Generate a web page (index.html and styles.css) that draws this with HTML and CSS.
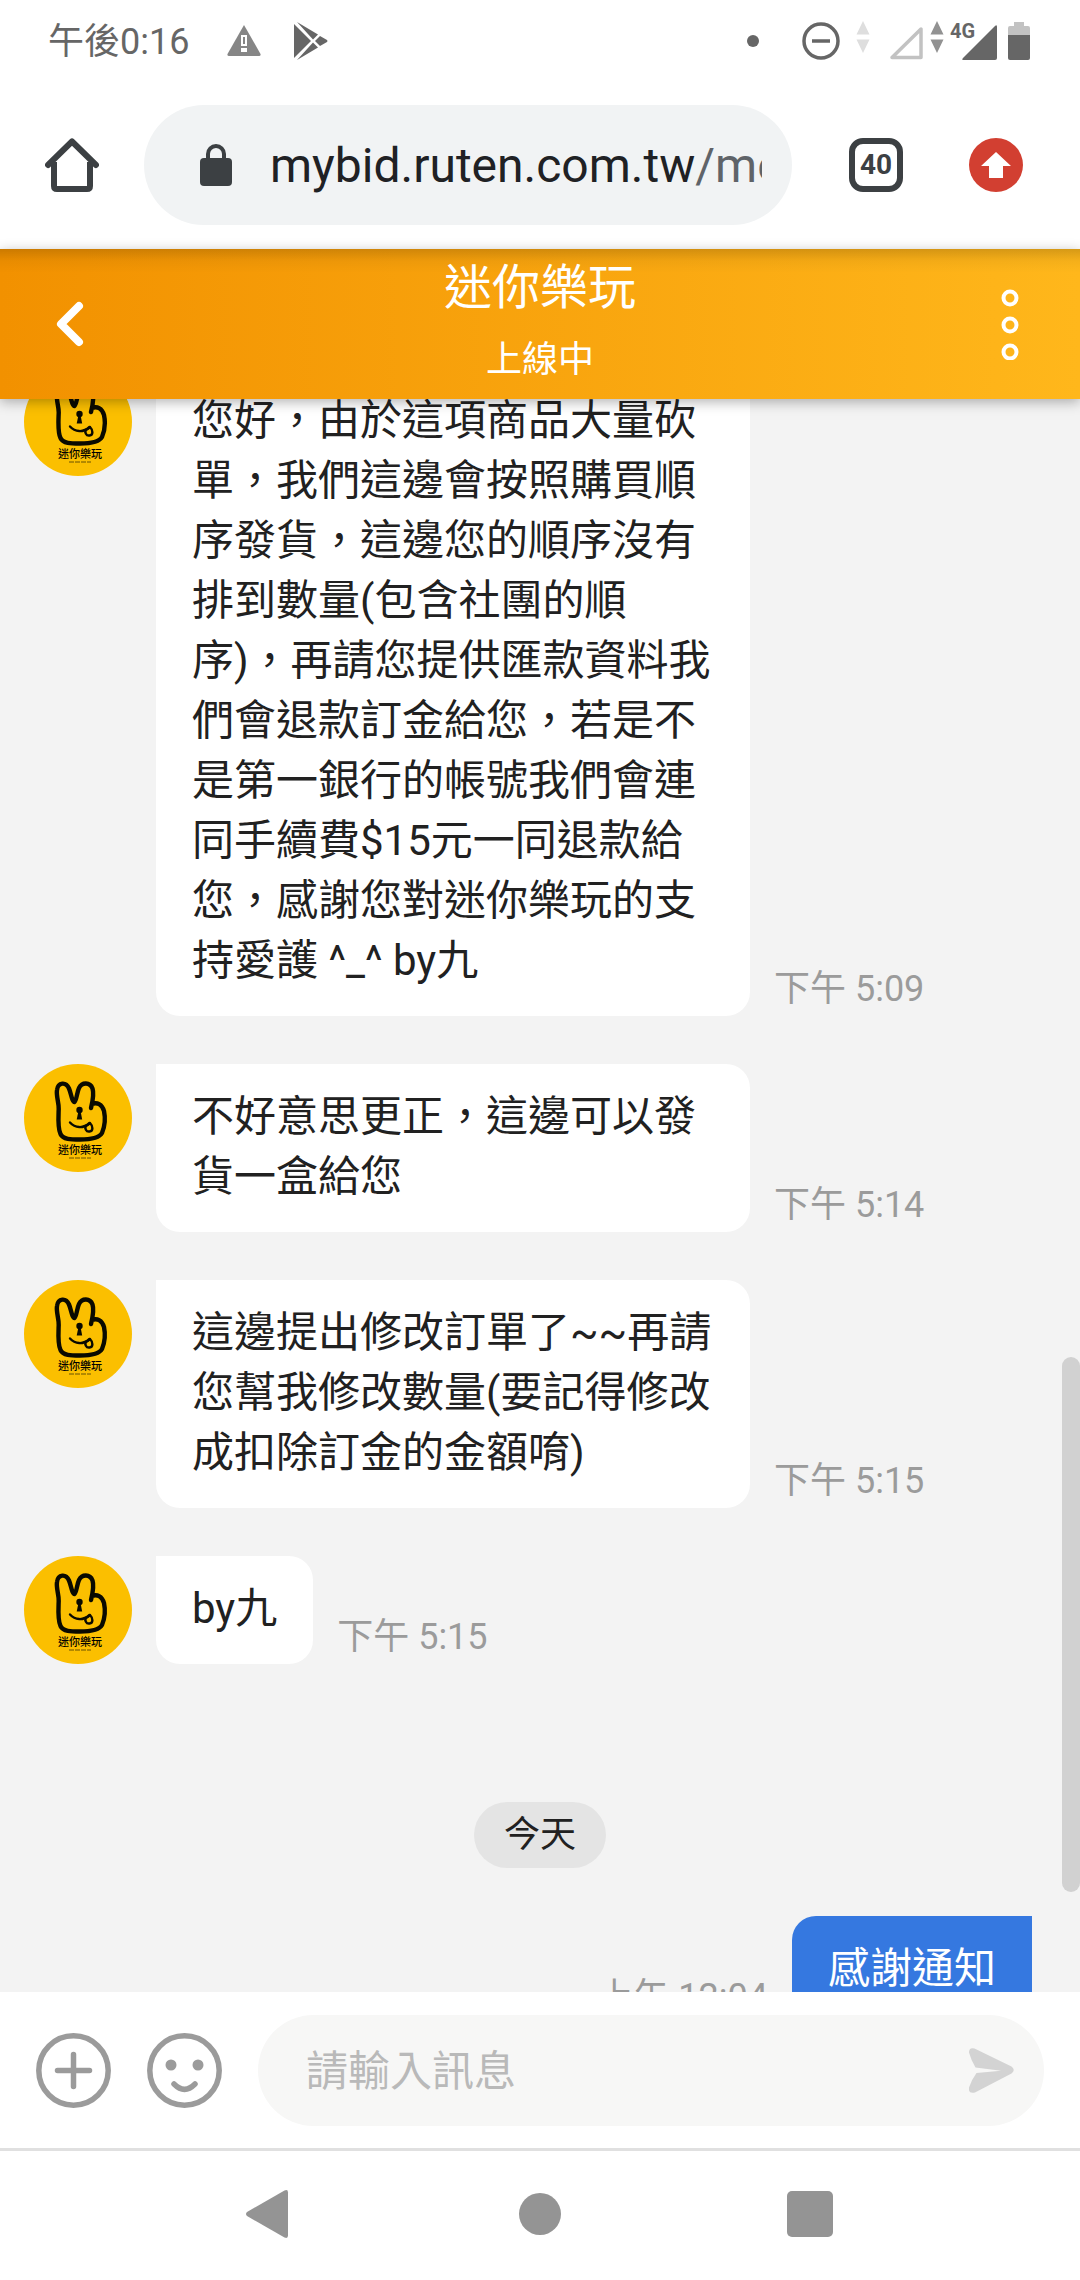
FILE: index.html
```html
<!DOCTYPE html>
<html lang="zh-Hant">
<head>
    <meta charset="UTF-8">
    <meta name="viewport" content="width=device-width, initial-scale=1.0">
    <title>迷你樂玩</title>
    <link rel="stylesheet" href="styles.css">
</head>
<body>

<!-- shop avatar, reused by every message -->
<svg class="sprite" aria-hidden="true">
    <symbol id="avatar" viewBox="0 0 108 108">
        <circle cx="54" cy="54" r="54" fill="#fbbf00"/>
        <g fill="none" stroke="#0a0a00" stroke-linecap="round" stroke-linejoin="round">
            <path stroke-width="4.4" d="M67 44C69 36 70 29 68.500 24.500C66 18 58 18 55 24C53 28 52.500 37 50.500 38C48 38 47 29 45 24.500C42 17.500 34 18 33 26C32 32 35 39 34.700 45C34.500 52 33.500 64 36.500 70C39 75.500 47 75.500 56 75.500C66 75.500 75 74.500 78 69C80.500 63 81.500 54 80 47C78 40 73 38 68 40"/>
            <path stroke-width="2.4" d="M46 58.500C51 64 59 65 65.500 59"/>
            <path stroke-width="2.400" d="M66 59C69 62 69.500 67 65.500 67.500C62 68 60.500 64 62 62C63 61 64.500 61 66 59z"/>
        </g>
        <circle cx="55.500" cy="46" r="3.200" fill="#0a0a00"/>
        <path d="M54.500 47h2l1.700 8.500h-5.500z" fill="#0a0a00"/>
        <text x="56" y="90" text-anchor="middle" class="avatar-name">迷你樂玩</text>
        <path d="M45 94h22" stroke="#6b5200" stroke-width="1" stroke-dasharray="5 1"/>
    </symbol>
</svg>

<div class="status-bar">
    <span class="clock">午後0:16</span>
    <svg class="icon-warning" width="34" height="32" viewBox="0 0 34 32">
        <path d="M17 0L33.500 29q.5 2-1.500 2H2q-2 0-1.500-2z" fill="#868686"/>
        <path d="M14 10h6v11h-6zM14 23h6v4h-6z" fill="#fff"/>
        <path d="M16 12h2v7h-2z" fill="#868686"/>
    </svg>
    <svg class="icon-play" width="34" height="38" viewBox="0 0 34 38" fill="#666">
        <path d="M0 2L17 19L0 36z"/>
        <path d="M3 0L24 12.500L19 17.500zM3 38L24 25.500L19 20.500z"/>
        <path d="M26 14L33 18q1 1 0 2L26 24L21 19z"/>
    </svg>
    <span class="dot"></span>
    <svg class="icon-dnd" width="38" height="38" viewBox="0 0 38 38" fill="none" stroke="#666" stroke-width="3.500">
        <circle cx="19" cy="19" r="17"/>
        <path d="M10 19h18"/>
    </svg>
    <svg class="icon-data" width="14" height="32" viewBox="0 0 14 32" fill="#dedede">
        <path d="M7 0l6.500 13.500H.5zM7 32l6.500-13.500H.5z"/>
    </svg>
    <svg class="icon-signal" width="36" height="36" viewBox="0 0 36 36">
        <path d="M33 4v28.500H4z" fill="none" stroke="#c2c2c2" stroke-width="3.500" stroke-linejoin="round"/>
    </svg>
    <svg class="icon-4g" width="68" height="40" viewBox="0 0 68 40">
        <path d="M7 0l6.500 13.500H.5zM7 32l6.500-13.500H.5z" fill="#929292"/>
        <path d="M65 5q2-2 2 1v31q0 2-2 2H34q-3 0-1-2z" fill="#666"/>
        <text x="20" y="17" class="label-4g">4G</text>
    </svg>
    <svg class="icon-battery" width="22" height="38" viewBox="0 0 22 38">
        <path d="M6 0h10v4h4q2 0 2 2v8H0V6q0-2 2-2h4z" fill="#c2c2c2"/>
        <path d="M0 13h22v23q0 2-2 2H2q-2 0-2-2z" fill="#666"/>
    </svg>
</div>

<div class="browser-bar">
    <button type="button" class="bar-button" aria-label="首頁">
        <svg width="54" height="54" viewBox="0 0 54 54" fill="none" stroke="#3c4043" stroke-width="6">
            <path d="M9 24v24q0 3 3 3h30q3 0 3-3V24"/>
            <path d="M3 27L27 3.500L51 27" stroke-linecap="round" stroke-linejoin="round"/>
        </svg>
    </button>
    <div class="url-box">
        <svg width="32" height="42" viewBox="0 0 32 42">
            <rect y="14" width="32" height="28" rx="4" fill="#3c4043"/>
            <path d="M8 16v-6a8 8 0 0 1 16 0v6" fill="none" stroke="#3c4043" stroke-width="4"/>
        </svg>
        <div class="url"><span>mybid.ruten.com.tw</span><span class="path">/me</span></div>
    </div>
    <button type="button" class="tabs-button" aria-label="分頁">40</button>
    <button type="button" class="bar-button" aria-label="更新">
        <svg width="54" height="54" viewBox="0 0 54 54">
            <circle cx="27" cy="27" r="27" fill="#d23f31"/>
            <path d="M27 14L42 28H34V40H20V28H12z" fill="#fff"/>
        </svg>
    </button>
</div>

<header class="chat-header">
    <button type="button" class="bar-button" aria-label="返回">
        <svg width="54" height="54" viewBox="0 0 54 54">
            <path d="M36 9L18 27L36 45" fill="none" stroke="#fff" stroke-width="8" stroke-linecap="round" stroke-linejoin="round"/>
        </svg>
    </button>
    <div class="chat-title">
        <h1>迷你樂玩</h1>
        <p>上線中</p>
    </div>
    <button type="button" class="bar-button" aria-label="選單">
        <svg width="54" height="72" viewBox="0 0 54 72" fill="none" stroke="#fff" stroke-width="4">
            <circle cx="27" cy="10" r="6.500"/>
            <circle cx="27" cy="37" r="6.500"/>
            <circle cx="27" cy="64" r="6.500"/>
        </svg>
    </button>
</header>

<main class="chat">
    <div class="messages">
        <div class="message">
            <svg class="avatar"><use href="#avatar"/></svg>
            <p class="bubble">您好，由於這項商品大量砍單，我們這邊會按照購買順序發貨，這邊您的順序沒有排到數量(包含社團的順序)，再請您提供匯款資料我們會退款訂金給您，若是不是第一銀行的帳號我們會連同手續費$15元一同退款給您，感謝您對迷你樂玩的支持愛護 ^_^ by九</p>
            <time>下午 5:09</time>
        </div>
        <div class="message">
            <svg class="avatar"><use href="#avatar"/></svg>
            <p class="bubble">不好意思更正，這邊可以發貨一盒給您</p>
            <time>下午 5:14</time>
        </div>
        <div class="message">
            <svg class="avatar"><use href="#avatar"/></svg>
            <p class="bubble">這邊提出修改訂單了~~再請您幫我修改數量(要記得修改成扣除訂金的金額唷)</p>
            <time>下午 5:15</time>
        </div>
        <div class="message">
            <svg class="avatar"><use href="#avatar"/></svg>
            <p class="bubble">by九</p>
            <time>下午 5:15</time>
        </div>
        <div class="date">今天</div>
        <div class="message mine">
            <time>上午 12:04</time>
            <p class="bubble">感謝通知</p>
        </div>
    </div>
    <div class="scroll-thumb"></div>
</main>

<form class="composer">
    <button type="button" aria-label="新增">
        <svg width="75" height="75" viewBox="0 0 75 75" fill="none" stroke="#9b9b9b" stroke-width="5.500" stroke-linecap="round">
            <circle cx="37.500" cy="37.500" r="34.700"/>
            <path d="M37.500 21.500v32M21.500 37.500h32"/>
        </svg>
    </button>
    <button type="button" aria-label="表情">
        <svg width="75" height="75" viewBox="0 0 75 75" fill="none" stroke="#9b9b9b" stroke-width="5.500" stroke-linecap="round">
            <circle cx="37.500" cy="37.500" r="34.700"/>
            <path d="M27 51q10.500 10.500 21 0"/>
            <g fill="#9b9b9b" stroke="none">
                <circle cx="24" cy="32" r="5.500"/>
                <circle cx="51" cy="32" r="5.500"/>
            </g>
        </svg>
    </button>
    <div class="input-box">
        <input type="text" placeholder="請輸入訊息" aria-label="請輸入訊息">
        <button type="submit" aria-label="送出">
            <svg width="45" height="45" viewBox="0 0 45 45">
                <path d="M5.500.5L42.500 18.500Q47 22 42.500 25.500L6 44.500Q-1 46 0 39.500Q3 31 7.500 25L32 22.700L6.500 19.500Q2 12 0 4.500Q0-1 5.500.5z" fill="#d3d3d3"/>
            </svg>
        </button>
    </div>
</form>

<nav class="system-nav">
    <button type="button" aria-label="上一頁">
        <svg width="48" height="48" viewBox="0 0 48 48" fill="#949494">
            <path d="M38.500.5q3.500-1.500 3.500 2v43q0 3.500-3.500 2L1 26q-2-2 0-4z"/>
        </svg>
    </button>
    <button type="button" aria-label="主畫面">
        <svg width="48" height="48" viewBox="0 0 48 48" fill="#949494">
            <circle cx="24" cy="24" r="21"/>
        </svg>
    </button>
    <button type="button" aria-label="最近使用">
        <svg width="48" height="48" viewBox="0 0 48 48" fill="#949494">
            <rect x="1" y="1" width="46" height="46" rx="5"/>
        </svg>
    </button>
</nav>

</body>
</html>
```
FILE: styles.css
```css
* {
    box-sizing: border-box;
}
body {
    display: flex;
    flex-direction: column;
    height: 100vh;
    margin: 0;
    background-color: #fff;
    color: #212121;
    font-family: Roboto, "Noto Sans CJK TC", sans-serif;
    font-size: 42px;
}
h1, p {
    margin: 0;
    font-weight: 400;
}
svg {
    display: block;
    flex: none;
}
button {
    flex: none;
    padding: 0;
    border: none;
    background: none;
    font-family: inherit;
    cursor: pointer;
}
.sprite {
    position: absolute;
    width: 0;
    height: 0;
}

/* phone status bar */
.status-bar {
    display: flex;
    align-items: center;
    height: 81px;
    padding: 0 50px 0 48px;
}
.clock {
    margin-right: 38px;
    padding-top: 2px;
    color: #666;
    font-size: 36px;
    line-height: 42px;
}
.icon-warning {
    margin-right: 33px;
}
.dot {
    width: 12px;
    height: 12px;
    margin-left: auto;
    border-radius: 50%;
    background-color: #666;
}
.icon-dnd {
    margin-left: 43px;
}
.icon-data {
    margin-left: 16px;
    margin-bottom: 8px;
}
.icon-signal {
    margin-left: 18px;
    margin-top: 4px;
}
.icon-4g {
    margin-left: 6px;
}
.icon-battery {
    margin-left: 10px;
}
.label-4g {
    fill: #666;
    font-size: 20px;
    font-weight: 700;
}

/* browser toolbar */
.browser-bar {
    display: flex;
    align-items: center;
    height: 168px;
    padding: 0 57px 0 45px;
}
.url-box {
    display: flex;
    flex: 1;
    align-items: center;
    min-width: 0;
    height: 120px;
    margin: 0 57px 0 45px;
    padding: 0 30px 0 56px;
    border-radius: 60px;
    background-color: #f1f3f4;
}
.url {
    display: flex;
    flex: 1;
    margin-left: 38px;
    padding-top: 2px;
    overflow: hidden;
    color: #202124;
    font-size: 48px;
    line-height: 60px;
    white-space: nowrap;
}
.url .path {
    color: #5f6368;
}
.tabs-button {
    width: 54px;
    height: 54px;
    margin-right: 66px;
    border: 6px solid #3c4043;
    border-radius: 14px;
    color: #3c4043;
    font-size: 28px;
    font-weight: 700;
    line-height: 42px;
}

/* chat header */
.chat-header {
    position: relative;
    z-index: 1;
    display: flex;
    align-items: center;
    justify-content: space-between;
    height: 150px;
    padding: 0 43px;
    background: linear-gradient(rgba(0, 0, 0, 0.16), rgba(0, 0, 0, 0.04) 12px, transparent 24px),
        linear-gradient(to right, #f29100, #ffb71b);
    box-shadow: 0 3px 12px rgba(0, 0, 0, 0.3);
    color: #fff;
    text-align: center;
}
.chat-title h1 {
    font-size: 48px;
    line-height: 72px;
}
.chat-title p {
    font-size: 36px;
    line-height: 72px;
}

/* conversation */
.chat {
    position: relative;
    flex: 1;
    min-height: 0;
    overflow: hidden;
    background-color: #f3f3f3;
}
.messages {
    display: flex;
    flex-direction: column;
    gap: 48px;
    margin-top: -31px;
    padding: 0 48px 48px 24px;
}
.message {
    display: flex;
    gap: 24px;
}
.avatar {
    width: 108px;
    height: 108px;
}
.avatar-name {
    font-size: 11px;
    font-weight: 500;
}
.bubble {
    max-width: 594px;
    padding: 23px 36px 25px;
    border-radius: 0 24px 24px 24px;
    background-color: #fff;
    line-height: 60px;
}
.message time {
    align-self: flex-end;
    color: #9b9b9b;
    font-size: 36px;
    line-height: 54px;
}
.mine {
    justify-content: flex-end;
}
.mine .bubble {
    border-radius: 24px 0 24px 24px;
    background-color: #3578e0;
    color: #fff;
}
.date {
    align-self: center;
    margin: 90px 0 0 24px;
    padding: 0 30px;
    border-radius: 33px;
    background-color: #e4e4e4;
    font-size: 36px;
    line-height: 66px;
}
.scroll-thumb {
    position: absolute;
    right: 0;
    bottom: 100px;
    width: 18px;
    height: 535px;
    border-radius: 9px;
    background-color: #d1d1d1;
}

/* message input */
.composer {
    display: flex;
    align-items: center;
    gap: 36px;
    height: 159px;
    padding: 0 36px;
    border-bottom: 3px solid #e0e0e0;
}
.input-box {
    display: flex;
    flex: 1;
    align-items: center;
    min-width: 0;
    height: 111px;
    padding: 0 30px 0 48px;
    border-radius: 56px;
    background-color: #f7f7f6;
}
.input-box input {
    flex: 1;
    min-width: 0;
    padding: 4px 0 0;
    border: none;
    outline: none;
    background: none;
    color: #212121;
    font-family: inherit;
    font-size: 42px;
    line-height: 60px;
}
.input-box input::placeholder {
    color: #b9b9b9;
}

/* phone navigation */
.system-nav {
    display: flex;
    justify-content: center;
    height: 129px;
    padding-bottom: 3px;
}
.system-nav button {
    display: flex;
    align-items: center;
    justify-content: center;
    width: 25%;
}
```
